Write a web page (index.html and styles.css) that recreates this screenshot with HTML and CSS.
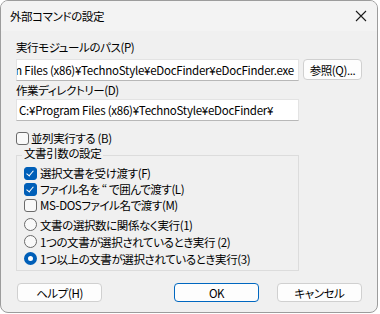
FILE: index.html
```html
<!DOCTYPE html>
<html lang="ja">

<head>
    <meta charset="UTF-8">
    <title>外部コマンドの設定</title>
    <link rel="stylesheet" href="styles.css">
</head>

<body>
    <div class="window">
        <div class="titlebar">
            <span class="title">外部コマンドの設定</span>
            <svg class="close" width="12" height="12" viewBox="0 0 12 12">
                <path d="M1 1 L11 11 M11 1 L1 11" stroke="#1b1b1b" stroke-width="1.1" fill="none" />
            </svg>
        </div>

        <div class="content">
            <div class="label first">実行モジュールのパス(P)</div>
            <div class="path-row">
                <div class="textbox end">
                    <span>C:¥Program Files (x86)¥TechnoStyle¥eDocFinder¥eDocFinder.exe</span>
                </div>
                <button class="btn browse">参照(Q)...</button>
            </div>

            <div class="label">作業ディレクトリー(D)</div>
            <div class="textbox">
                <span>C:¥Program Files (x86)¥TechnoStyle¥eDocFinder¥</span>
            </div>

            <label class="check parallel"><span class="box"></span>並列実行する (B)</label>

            <fieldset class="group">
                <legend>文書引数の設定</legend>
                <label class="check opt"><span class="box on"></span>選択文書を受け渡す(F)</label>
                <label class="check opt"><span class="box on"></span>ファイル名を “ で囲んで渡す(L)</label>
                <label class="check opt"><span class="box"></span>MS-DOSファイル名で渡す(M)</label>
                <div class="radios">
                    <label class="check radio"><span class="dot"></span>文書の選択数に関係なく実行(1)</label>
                    <label class="check radio"><span class="dot"></span>1つの文書が選択されているとき実行 (2)</label>
                    <label class="check radio"><span class="dot on"></span>1つ以上の文書が選択されているとき実行(3)</label>
                </div>
            </fieldset>

            <div class="buttons">
                <button class="btn help">ヘルプ(H)</button>
                <div class="spacer"></div>
                <button class="btn default">OK</button>
                <button class="btn">キャンセル</button>
            </div>
        </div>
    </div>
</body>

</html>
```

FILE: styles.css
```css
body {
    margin: 0;
    background: #ffffff;
    font-family: "Noto Sans CJK JP", "Noto Sans", sans-serif;
    font-size: 11.5px;
    letter-spacing: -0.4px;
    font-feature-settings: "palt";
    color: #000;
}

.window {
    width: 378px;
    height: 313px;
    box-sizing: border-box;
    border: 1px solid #9c9c9c;
    border-radius: 8px;
    background: #f0f0f0;
    overflow: hidden;
}

.titlebar {
    height: 30px;
    background: #f3f3f3;
    display: flex;
    align-items: center;
    justify-content: space-between;
    padding: 0 9px 0 9px;
}

.title {
    line-height: 16px;
}

.close {
    margin-right: 1px;
}

.content {
    padding: 0 15px;
}

.label {
    line-height: 16px;
    margin-top: 1px;
}

.label.first {
    margin-top: 8px;
}

.path-row {
    display: flex;
    align-items: flex-start;
    gap: 4px;
    margin-top: 4px;
}

.textbox {
    width: 283px;
    height: 22px;
    box-sizing: border-box;
    background: #fff;
    border: 1px solid #e3e3e3;
    border-bottom-color: #b8b8b8;
    display: flex;
    align-items: center;
    padding: 0 4px 0 2px;
    white-space: nowrap;
    overflow: hidden;
    margin-top: 1px;
    letter-spacing: -0.25px;
}

.path-row .textbox {
    margin-top: 0;
}

.textbox.end {
    justify-content: flex-end;
}

.btn {
    font-family: inherit;
    font-size: 11.5px;
    letter-spacing: -0.4px;
    font-feature-settings: "palt";
    color: #000;
    background: #fdfdfd;
    border: 1px solid #d0d0d0;
    border-radius: 4px;
    padding: 0;
    height: 20px;
    line-height: 16px;
}

.browse {
    width: 59px;
    height: 21px;
}

.check {
    display: flex;
    align-items: center;
    gap: 3px;
    line-height: 16px;
}

.box {
    width: 13px;
    height: 13px;
    box-sizing: border-box;
    border: 1px solid #6a6a6a;
    border-radius: 3px;
    background: #f9f9f9;
    position: relative;
    flex: none;
}

.box.on {
    background: #005fb8;
    border-color: #005fb8;
}

.box.on::after {
    content: "";
    position: absolute;
    left: 3px;
    top: 1px;
    width: 3px;
    height: 6px;
    border-right: 1px solid #fff;
    border-bottom: 1px solid #fff;
    transform: rotate(40deg);
}

.dot {
    width: 13px;
    height: 13px;
    box-sizing: border-box;
    border: 1px solid #6a6a6a;
    border-radius: 50%;
    background: #f9f9f9;
    flex: none;
}

.dot.on {
    border: 4px solid #005fb8;
    background: #fff;
}

.parallel {
    margin-top: 10px;
    height: 14px;
    gap: 2px;
}

.group {
    margin: 0;
    width: 283px;
    box-sizing: border-box;
    border: 1px solid #dcdcdc;
    padding: 0 7px 3px 7px;
    min-width: 0;
}

.group legend {
    padding: 0 2px 4px;
    margin-left: -2px;
    line-height: 16px;
}

.opt {
    height: 16px;
}

.radios {
    margin-top: 3px;
}

.radio {
    height: 17px;
}

.buttons {
    display: flex;
    margin-top: 12px;
    gap: 18px;
}

.buttons .btn {
    width: 85px;
    height: 19px;
}

.buttons .help {
    margin-left: 1px;
}

.spacer {
    flex: 1;
    margin-left: -36px;
}

.btn.default {
    border-color: #0067c0;
}
```
